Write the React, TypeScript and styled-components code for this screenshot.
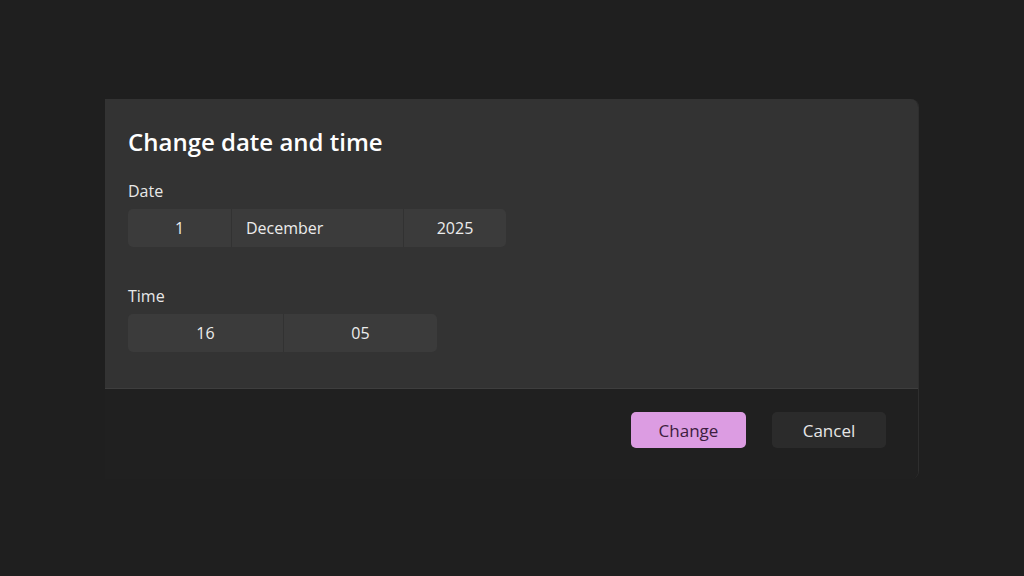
import React from "react";
import styled, { createGlobalStyle } from "styled-components";

const GlobalStyle = createGlobalStyle`
  html, body {
    margin: 0;
    padding: 0;
    background: #1f1f1f;
  }
  body {
    font-family: "Open Sans", "Noto Sans", sans-serif;
    color: #f2f2f2;
  }
`;

const Page = styled.div`
  width: 1024px;
  height: 576px;
  padding-top: 99px;
  padding-left: 105px;
  box-sizing: border-box;
`;

const Dialog = styled.div`
  width: 813px;
  display: flex;
  flex-direction: column;
  border-right: 1px solid #2e2e2e;
  border-bottom-right-radius: 8px;
  border-top-right-radius: 8px;
  overflow: hidden;
`;

const Body = styled.div`
  background: #333333;
  padding: 26px 23px 36px;
  border-bottom: 1px solid #3e3e3e;
`;

const Title = styled.h1`
  margin: 0 0 21px;
  font-size: 24px;
  font-weight: 600;
  line-height: 34px;
  color: #ffffff;
`;

const Label = styled.div`
  font-size: 16px;
  line-height: 22px;
  color: #e8e8e8;
  margin-bottom: 7px;
`;

const Field = styled.div`
  display: flex;
  height: 38px;
  border-radius: 5px;
  background: #3b3b3b;
  overflow: hidden;
  width: fit-content;
`;

const Segment = styled.div<{ $w: number; $left?: boolean }>`
  width: ${(p) => p.$w}px;
  display: flex;
  align-items: center;
  justify-content: ${(p) => (p.$left ? "flex-start" : "center")};
  padding-left: ${(p) => (p.$left ? "14px" : "0")};
  box-sizing: border-box;
  font-size: 16px;
  color: #ececec;
  & + & {
    border-left: 1px solid #323232;
  }
`;

const Group = styled.div<{ $gap?: number }>`
  margin-top: ${(p) => p.$gap ?? 0}px;
`;

const Footer = styled.div`
  background: #202020;
  height: 90px;
  box-sizing: border-box;
  padding: 23px 32px 0 0;
  display: flex;
  align-items: flex-start;
  justify-content: flex-end;
  gap: 26px;
`;

const Button = styled.button<{ $primary?: boolean }>`
  width: ${(p) => (p.$primary ? 115 : 114)}px;
  height: 36px;
  border-radius: 5px;
  border: none;
  font-family: inherit;
  font-size: 17px;
  background: ${(p) => (p.$primary ? "#dc9ce2" : "#2b2b2b")};
  color: ${(p) => (p.$primary ? "#3d1e40" : "#e6e6e6")};
`;

export default function App() {
  return (
    <>
      <GlobalStyle />
      <Page>
        <Dialog>
          <Body>
            <Title>Change date and time</Title>
            <Group>
              <Label>Date</Label>
              <Field>
                <Segment $w={103}>1</Segment>
                <Segment $w={172} $left>
                  December
                </Segment>
                <Segment $w={103}>2025</Segment>
              </Field>
            </Group>
            <Group $gap={38}>
              <Label>Time</Label>
              <Field>
                <Segment $w={155}>16</Segment>
                <Segment $w={154}>05</Segment>
              </Field>
            </Group>
          </Body>
          <Footer>
            <Button $primary>Change</Button>
            <Button>Cancel</Button>
          </Footer>
        </Dialog>
      </Page>
    </>
  );
}
